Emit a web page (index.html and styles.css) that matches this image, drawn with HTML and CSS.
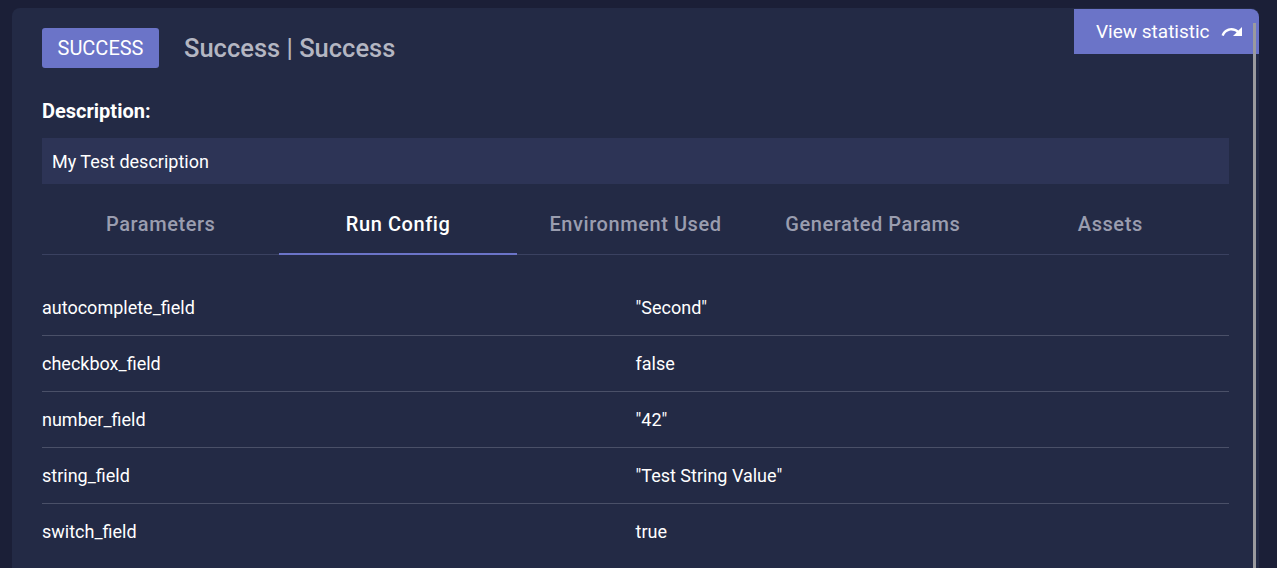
FILE: index.html
```html
<!DOCTYPE html>
<html>
<head>
<meta charset="utf-8">
<link rel="stylesheet" href="styles.css">
</head>
<body>
<div class="card">
  <button class="stat-btn">View statistic
    <svg class="stat-icon" viewBox="0 0 24 24" width="24" height="24"><path fill="#ffffff" d="M18.4 10.6C16.55 8.99 14.150 8 11.5 8c-4.65 0-8.58 3.03-9.960 7.22L3.9 16c1.05-3.19 4.05-5.5 7.6-5.5 1.95 0 3.730.72 5.12 1.88L13 16h9V7l-3.6 3.6z"/></svg>
  </button>
  <div class="scroll-track"></div>
  <div class="header">
    <span class="badge">SUCCESS</span>
    <span class="title">Success | Success</span>
  </div>
  <div class="desc-label">Description:</div>
  <div class="desc-box">My Test description</div>
  <div class="tabs">
    <div class="tab">Parameters</div>
    <div class="tab active">Run Config</div>
    <div class="tab">Environment Used</div>
    <div class="tab">Generated Params</div>
    <div class="tab">Assets</div>
  </div>
  <div class="table">
    <div class="row"><div class="cell">autocomplete_field</div><div class="cell">"Second"</div></div>
    <div class="row"><div class="cell">checkbox_field</div><div class="cell">false</div></div>
    <div class="row"><div class="cell">number_field</div><div class="cell">"42"</div></div>
    <div class="row"><div class="cell">string_field</div><div class="cell">"Test String Value"</div></div>
    <div class="row"><div class="cell">switch_field</div><div class="cell">true</div></div>
  </div>
</div>
</body>
</html>
```

FILE: styles.css
```css
html, body {
  margin: 0;
  padding: 0;
  background: #1b1f37;
  height: 100%;
  overflow: hidden;
}
body {
  padding: 8px 18px 0 12px;
  font-family: Roboto, "Liberation Sans", sans-serif;
  color: #ffffff;
}
.card {
  position: relative;
  background: #232a45;
  border-radius: 8px 8px 0 0;
  padding: 20px 30px 40px 30px;
  min-height: 600px;
}
.stat-btn {
  position: absolute;
  top: 1px;
  right: 0;
  width: 185px;
  height: 45px;
  background: #6b74c8;
  border: none;
  border-radius: 0 8px 0 0;
  color: #ffffff;
  font-family: Roboto, "Liberation Sans", sans-serif;
  font-size: 19px;
  display: flex;
  align-items: center;
  justify-content: flex-start;
  padding: 0 0 0 22px;
  gap: 10px;
  cursor: pointer;
}
.stat-icon {
  display: block;
  margin-top: 1px;
}
.scroll-track {
  position: absolute;
  top: 15px;
  right: 3px;
  bottom: 0;
  width: 3px;
  background: #9a9a9e;
}
.header {
  display: flex;
  align-items: center;
  gap: 25px;
}
.badge {
  display: inline-flex;
  align-items: center;
  justify-content: center;
  height: 40px;
  width: 117px;
  background: #6b74c8;
  border-radius: 3px;
  font-size: 20px;
  color: #ffffff;
}
.title {
  font-size: 25.5px;
  font-weight: 500;
  color: #b4b6c2;
}
.desc-label {
  margin-top: 31px;
  font-size: 20px;
  font-weight: 700;
  line-height: 24px;
}
.desc-box {
  margin-top: 15px;
  background: #2d3456;
  height: 46px;
  display: flex;
  align-items: center;
  padding-left: 10px;
  font-size: 18px;
}
.tabs {
  display: grid;
  grid-template-columns: repeat(5, 1fr);
  border-bottom: 1px solid #3a4160;
  margin-top: 11px;
}
.tab {
  height: 60px;
  display: flex;
  align-items: center;
  justify-content: center;
  font-size: 20px;
  font-weight: 500;
  letter-spacing: 0.02857em;
  color: #9a9daf;
  border-bottom: 2px solid transparent;
  margin-bottom: -1px;
  box-sizing: border-box;
}
.tab.active {
  color: #ffffff;
  border-bottom-color: #6b74c8;
}
.table {
  margin-top: 25px;
}
.row {
  display: grid;
  grid-template-columns: 1fr 1fr;
  height: 56px;
  border-bottom: 1px solid #4a5068;
  box-sizing: border-box;
}
.row:last-child {
  border-bottom-color: transparent;
}
.cell {
  display: flex;
  align-items: center;
  font-size: 18px;
  color: #ffffff;
}
```
